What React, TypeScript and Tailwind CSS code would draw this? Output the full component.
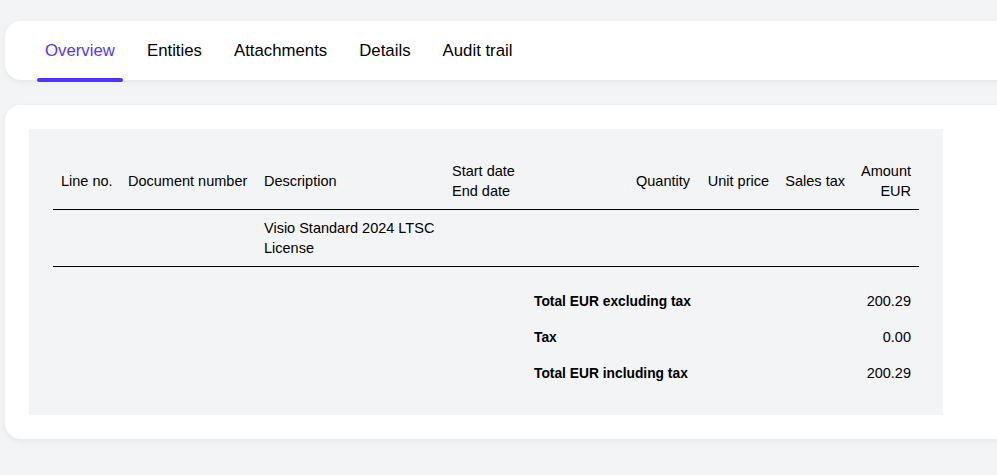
import React from 'react';

const tabs = ['Overview', 'Entities', 'Attachments', 'Details', 'Audit trail'];

const totals = [
  { label: 'Total EUR excluding tax', value: '200.29' },
  { label: 'Tax', value: '0.00' },
  { label: 'Total EUR including tax', value: '200.29' },
];

export default function App() {
  return (
    <div
      className="min-h-[475px] overflow-hidden bg-[#f3f4f6] pl-[5px] pt-[21px] text-black"
      style={{ fontFamily: '"Liberation Sans", Arial, sans-serif' }}
    >
      {/* tabs */}
      <div className="-mr-10 h-[59px] rounded-l-2xl bg-white pl-8 shadow-[0_2px_6px_rgba(0,0,0,0.06)]">
        <div className="flex h-full gap-4">
          {tabs.map((tab, i) => (
            <div key={tab} className="relative flex h-full items-center px-2">
              <span className={`text-[16.8px] ${i === 0 ? 'text-[#5533ff]' : 'text-black'}`}>{tab}</span>
              {i === 0 && (
                <span className="absolute -bottom-[2px] left-0 right-0 h-[4px] rounded-full bg-[#5230ff]" />
              )}
            </div>
          ))}
        </div>
      </div>

      {/* content */}
      <div className="-mr-10 mt-[25px] rounded-l-2xl bg-white py-6 pl-6 shadow-[0_2px_6px_rgba(0,0,0,0.06)]">
        <div className="w-[914px] bg-[#f3f4f6] p-6">
          <table className="w-[866px] table-fixed border-collapse text-[14.5px] leading-5">
            <colgroup>
              <col className="w-[67px]" />
              <col className="w-[136px]" />
              <col className="w-[188px]" />
              <col className="w-[82px]" />
              <col className="w-[172px]" />
              <col className="w-[79px]" />
              <col className="w-[76px]" />
              <col className="w-[66px]" />
            </colgroup>
            <thead>
              <tr className="border-b border-black">
                <th className="px-2 py-2 text-left font-normal whitespace-nowrap">Line no.</th>
                <th className="px-2 py-2 text-left font-normal whitespace-nowrap">Document number</th>
                <th className="px-2 py-2 text-left font-normal">Description</th>
                <th className="px-2 py-2 text-left font-normal whitespace-nowrap">
                  Start date
                  <br />
                  End date
                </th>
                <th className="px-2 py-2 text-right font-normal">Quantity</th>
                <th className="px-2 py-2 text-right font-normal whitespace-nowrap">Unit price</th>
                <th className="px-2 py-2 text-right font-normal whitespace-nowrap">Sales tax</th>
                <th className="px-2 py-2 text-right font-normal">
                  Amount
                  <br />
                  EUR
                </th>
              </tr>
            </thead>
            <tbody>
              <tr className="border-b border-black">
                <td className="px-2 py-2" />
                <td className="px-2 py-2" />
                <td className="px-2 py-2 align-top">Visio Standard 2024 LTSC License</td>
                <td className="px-2 py-2" />
                <td className="px-2 py-2" />
                <td className="px-2 py-2" />
                <td className="px-2 py-2" />
                <td className="px-2 py-2" />
              </tr>
              <tr>
                <td colSpan={8} className="h-4 p-0" />
              </tr>
              {totals.map((t) => (
                <tr key={t.label}>
                  <td colSpan={4} />
                  <td colSpan={3} className="px-2 py-2 text-[13.8px] font-bold whitespace-nowrap">
                    <span className="relative top-px">{t.label}</span>
                  </td>
                  <td className="px-2 py-2 text-right">{t.value}</td>
                </tr>
              ))}
            </tbody>
          </table>
        </div>
      </div>
    </div>
  );
}
